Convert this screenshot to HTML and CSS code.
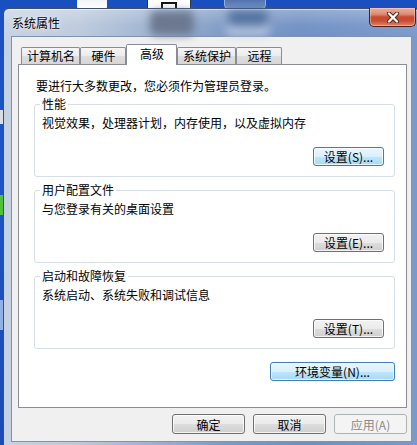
FILE: index.html
```html
<!DOCTYPE html>
<html lang="zh-CN">
<head>
<meta charset="utf-8">
<title>系统属性</title>
<link rel="stylesheet" href="styles.css">
</head>
<body>
<div class="desktop">
  <div class="dicon dicon-doc"></div>
  <div class="dicon dicon-app"><span></span></div>
  <div class="dicon dicon-blue"></div>
  <div class="dspot dspot-a"></div>
  <div class="dspot dspot-b"></div>
  <div class="dspot dspot-c"></div>

  <div class="window">
    <div class="titlebar">
      <span class="glass-blob blob-a"></span>
      <span class="glass-blob blob-b"></span>
      <span class="title">系统属性</span>
      <button class="close" type="button" aria-label="关闭">
        <svg width="14" height="11" viewBox="0 0 14 11">
          <path d="M3 1.5 L11 9.5 M11 1.5 L3 9.5" stroke="#5a1f14" stroke-width="4.2" stroke-linecap="round" fill="none"/>
          <path d="M3 1.5 L11 9.5 M11 1.5 L3 9.5" stroke="#ffffff" stroke-width="2.4" stroke-linecap="round" fill="none"/>
        </svg>
      </button>
    </div>

    <div class="client">
      <div class="tabs">
        <div class="tab">计算机名</div>
        <div class="tab">硬件</div>
        <div class="tab tab-active">高级</div>
        <div class="tab">系统保护</div>
        <div class="tab">远程</div>
      </div>

      <div class="panel">
        <p class="note">要进行大多数更改，您必须作为管理员登录。</p>

        <fieldset class="group">
          <legend>性能</legend>
          <p class="desc">视觉效果，处理器计划，内存使用，以及虚拟内存</p>
          <div class="btn-row"><button class="btn btn-blue btn-set" type="button">设置(S)...</button></div>
        </fieldset>

        <fieldset class="group">
          <legend>用户配置文件</legend>
          <p class="desc">与您登录有关的桌面设置</p>
          <div class="btn-row"><button class="btn btn-set" type="button">设置(E)...</button></div>
        </fieldset>

        <fieldset class="group">
          <legend>启动和故障恢复</legend>
          <p class="desc">系统启动、系统失败和调试信息</p>
          <div class="btn-row"><button class="btn btn-set" type="button">设置(T)...</button></div>
        </fieldset>

        <div class="env-row"><button class="btn btn-blue btn-env" type="button">环境变量(N)...</button></div>
      </div>

      <div class="footer">
        <button class="btn btn-foot" type="button">确定</button>
        <button class="btn btn-foot" type="button">取消</button>
        <button class="btn btn-foot btn-disabled" type="button" disabled>应用(A)</button>
      </div>
    </div>
  </div>
</div>
</body>
</html>
```

FILE: styles.css
```css
* {
  box-sizing: border-box;
}

html, body {
  margin: 0;
  padding: 0;
  width: 417px;
  height: 445px;
  overflow: hidden;
}

body {
  font-family: "Noto Sans CJK SC", "Liberation Sans", sans-serif;
  font-size: 12px;
  color: #000;
}

.desktop {
  position: relative;
  width: 417px;
  height: 445px;
  overflow: hidden;
  background: linear-gradient(180deg, #1a4fbf 0%, #1d55c4 40%, #1a4bb3 100%);
}

/* desktop icons peeking above the window */
.dicon {
  position: absolute;
  top: -4px;
  height: 13px;
}

.dicon-doc {
  left: 77px;
  width: 30px;
  background: linear-gradient(180deg, #e9edf3, #ffffff);
  border-radius: 0 0 2px 2px;
}

.dicon-app {
  left: 147px;
  width: 44px;
  background: #ffffff;
  border: 1px solid #2a3650;
}

.dicon-app span {
  display: block;
  margin: 5px auto 0;
  width: 16px;
  height: 6px;
  border: 2px solid #111;
  border-bottom: none;
}

.dicon-blue {
  left: 224px;
  width: 42px;
  background: linear-gradient(180deg, #4a6aa8, #6e8fc6);
  border: 1px solid #9bb1d6;
  border-radius: 0 0 4px 4px;
}

.dspot {
  position: absolute;
  left: 0;
  width: 4px;
}

.dspot-a {
  top: 110px;
  height: 14px;
  background: #d8dde6;
}

.dspot-b {
  top: 195px;
  height: 20px;
  background: #4fc23b;
}

.dspot-c {
  top: 300px;
  height: 30px;
  background: #8fb2e6;
}

/* window */
.window {
  position: absolute;
  left: 3px;
  top: 8px;
  width: 417px;
  height: 441px;
  display: flex;
  flex-direction: column;
  border: 1px solid #3d4f6c;
  border-radius: 6px 6px 0 0;
  background:
    linear-gradient(180deg, rgba(255, 255, 255, 0.28) 0px, rgba(255, 255, 255, 0.05) 16px, rgba(255, 255, 255, 0) 30px),
    linear-gradient(90deg, #c6d2e2 0%, #bccadd 18%, #a2b6d2 33%, #7f9bc5 52%, #6f8fc4 72%, #7a9acb 100%);
  box-shadow: inset 0 1px 0 rgba(255, 255, 255, 0.55);
}

.titlebar {
  position: relative;
  height: 27px;
  display: flex;
  align-items: flex-start;
  padding-left: 8px;
}

.glass-blob {
  position: absolute;
  top: 2px;
  height: 24px;
  filter: blur(4px);
  border-radius: 6px;
}

.blob-a {
  left: 146px;
  width: 44px;
  background: #6c7890;
}

.blob-b {
  left: 222px;
  width: 44px;
  background: #52709f;
  box-shadow: inset 0 -8px 6px #c9d6ea;
}

.title {
  position: relative;
  align-self: center;
  flex: 1;
  line-height: 14px;
  margin-top: 1px;
  color: #000;
  text-shadow: 0 0 6px rgba(255, 255, 255, 0.9), 0 0 2px rgba(255, 255, 255, 0.8);
}

.close {
  position: relative;
  width: 47px;
  height: 19px;
  margin: -1px 3px 0 0;
  padding: 0;
  display: flex;
  align-items: center;
  justify-content: center;
  border: 1px solid #4b1f1a;
  border-top: none;
  border-radius: 0 0 5px 5px;
  background: linear-gradient(180deg, #eab0a0 0%, #dc8b74 35%, #c84a2f 50%, #c94d31 70%, #de8466 100%);
  box-shadow: inset 0 0 0 1px rgba(255, 220, 200, 0.45);
}

/* client area */
.client {
  flex: 1;
  margin: 0 7px 0 7px;
  display: flex;
  flex-direction: column;
  background: #f0f0f0;
  border: 1px solid #8093ae;
  padding: 7px 4px 7px 6px;
  height: 406px;
  flex: none;
}

.tabs {
  display: flex;
  align-items: flex-end;
  height: 20px;
  padding-left: 3px;
}

.tab {
  position: relative;
  height: 17px;
  min-width: 46px;
  padding: 0 4px 0 5px;
  text-align: center;
  line-height: 16px;
  white-space: nowrap;
  border: 1px solid #898c95;
  border-bottom: none;
  border-radius: 2px 2px 0 0;
  background: linear-gradient(180deg, #f6f6f6 0%, #ebebeb 50%, #dedede 51%, #d6d6d6 100%);
}

.tab-active {
  z-index: 1;
  height: 21px;
  min-width: 51px;
  margin-bottom: -1px;
  line-height: 18px;
  background: #ffffff;
}

.panel {
  height: 344px;
  background: #ffffff;
  border: 1px solid #898c95;
  padding: 0 11px 0 15px;
}

.note {
  margin: 14px 0 4px;
  padding-left: 2px;
  line-height: 14px;
}

.group {
  margin: 0;
  padding: 0 10px 10px 7px;
  border: 1px solid #d5dfe5;
  border-radius: 3px;
}

.group + .group {
  margin-top: 6px;
}

.group legend {
  margin-left: -2px;
  padding: 0 2px;
  line-height: 14px;
}

.desc {
  margin: 5px 0 0;
  line-height: 14px;
}

.btn-row {
  display: flex;
  justify-content: flex-end;
  margin-top: 17px;
}

.env-row {
  display: flex;
  justify-content: flex-end;
  margin-top: 13px;
}

/* buttons */
.btn {
  height: 19px;
  padding: 0;
  font-family: "Noto Sans CJK SC", "Liberation Sans", sans-serif;
  font-size: 12px;
  line-height: 15px;
  color: #000;
  border: 1px solid #707070;
  border-radius: 3px;
  background: linear-gradient(180deg, #f2f2f2 0%, #ebebeb 50%, #dddddd 51%, #cfcfcf 100%);
  box-shadow: inset 0 0 0 1px rgba(255, 255, 255, 0.75);
}

.btn-blue {
  border-color: #3c7fb1;
  background: linear-gradient(180deg, #eaf6fd 0%, #d9f0fc 50%, #bee6fd 51%, #a7d9f5 100%);
}

.btn-set {
  width: 71px;
}

.btn-env {
  width: 125px;
}

.footer {
  display: flex;
  justify-content: flex-end;
  gap: 8px;
  margin-top: 6px;
}

.btn-foot {
  width: 73px;
  height: 20px;
}

.btn-disabled {
  color: #8a8a8a;
  border-color: #adb2b5;
  background: #f4f4f4;
  box-shadow: none;
}
```
